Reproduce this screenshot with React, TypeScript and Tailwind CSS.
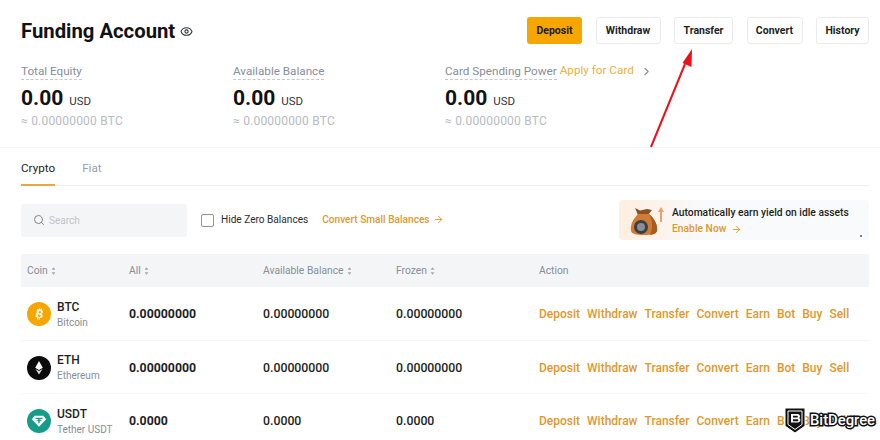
import React from "react";
import { Eye, Search, ArrowRight, ChevronRight } from "lucide-react";

const font = "font-['Roboto','Noto_Sans',sans-serif]";

const buttons = [
  { label: "Withdraw", w: "w-[65px]" },
  { label: "Transfer", w: "w-[59px]" },
  { label: "Convert", w: "w-[56px]" },
  { label: "History", w: "w-[53px]" },
];

const actions = ["Deposit", "Withdraw", "Transfer", "Convert", "Earn", "Bot", "Buy", "Sell"];

const rows = [
  { sym: "BTC", name: "Bitcoin", bal: "0.00000000", icon: "btc" },
  { sym: "ETH", name: "Ethereum", bal: "0.00000000", icon: "eth" },
  { sym: "USDT", name: "Tether USDT", bal: "0.0000", icon: "usdt" },
];

const CoinIcon: React.FC<{ kind: string }> = ({ kind }) => {
  if (kind === "btc") {
    return (
      <svg viewBox="0 0 24 24" className="w-6 h-6 shrink-0">
        <circle cx="12" cy="12" r="12" fill="#f7a600" />
        <g transform="rotate(12 12 12)">
          <path d="M9.2 7.5h3.9c1.5 0 2.4.8 2.4 2 0 .9-.5 1.5-1.2 1.8 1 .2 1.7 1 1.7 2.1 0 1.4-1 2.3-2.7 2.3H9.2zm2.2 1.6v2h1.3c.7 0 1-.4 1-1s-.3-1-1-1zm0 3.5v2.2h1.6c.7 0 1.1-.4 1.1-1.1s-.4-1.1-1.1-1.1zM11 6h1.1v1.5H11zm1.8 0h1.1v1.5h-1.1zM11 15.9h1.1v1.7H11zm1.8 0h1.1v1.7h-1.1z" fill="#fff" opacity="0.9" />
        </g>
      </svg>
    );
  }
  if (kind === "eth") {
    return (
      <svg viewBox="0 0 24 24" className="w-6 h-6 shrink-0">
        <circle cx="12" cy="12" r="12" fill="#0b0b0b" />
        <path d="M12 5l-3.800 6.800L12 14l3.800-2.200z" fill="#fff" />
        <path d="M8.400 13L12 18.600l3.600-5.600L12 15.100z" fill="#d8d8d8" />
      </svg>
    );
  }
  return (
    <svg viewBox="0 0 24 24" className="w-6 h-6 shrink-0">
      <circle cx="12" cy="12" r="12" fill="#179c8c" />
      <path d="M7.600 6.800h8.800l2.800 3.400L12 17.800 4.800 10.200z" fill="#fff" />
      <path d="M8.600 8.800h6.800V10h-2.700v.7c1.200.1 2 .3 2 .6s-.8.5-2 .6v2.400h-1.400v-2.400c-1.200-.1-2-.3-2-.6s.8-.5 2-.6V10H8.600z" fill="#179c8c" />
    </svg>
  );
};

const Stat: React.FC<{ label: string; extra?: boolean }> = ({ label, extra }) => (
  <div className="w-[212px] shrink-0">
    <div className="flex items-center h-[18px] text-[11.7px] whitespace-nowrap">
      <span className="text-[#868e9a] border-b border-dashed border-[#c4c8ce] leading-[16px]">{label}</span>
      {extra && (
        <>
          <span className="ml-[3px] text-[#eeb042]">Apply for Card</span>
          <ChevronRight className="ml-[6px] w-[13px] h-[13px] text-[#868e9a]" />
        </>
      )}
    </div>
    <div className="flex items-baseline mt-[4px] h-[28px]">
      <span className="text-[21px] font-bold leading-[28px] text-[#121214]">0.00</span>
      <span className="ml-[6px] text-[11.5px] text-[#32363c]">USD</span>
    </div>
    <div className="text-[12px] leading-[18px] text-[#b7bbc2] tracking-[0.2px]">≈ 0.00000000 BTC</div>
  </div>
);

const SortHead: React.FC<{ label: string; className: string }> = ({ label, className }) => (
  <div className={`flex items-center text-[10.3px] text-[#868e9a] ${className}`}>
    {label}
    <svg viewBox="0 0 6 9" className="ml-[3px] w-[5px] h-[8px]">
      <path d="M3 0l2.400 3H.6zM3 9L.6 6h4.800z" fill="#a4a9b1" />
    </svg>
  </div>
);

export default function App() {
  return (
    <div className={`relative w-[880px] h-[440px] overflow-hidden bg-white ${font}`}>
      {/* Header */}
      <div className="flex justify-between items-start pl-[21px] pr-[11px] pt-[17px]">
        <div className="flex items-center h-[27px] pt-[1px]">
          <h1 className="text-[20.3px] font-bold text-[#121214] leading-none">Funding Account</h1>
          <Eye className="ml-[5px] w-[13px] h-[13px] text-[#32363c]" />
        </div>
        <div className="flex gap-[13.5px]">
          <button className="w-[55px] h-[27px] pt-[1px] rounded-[3px] bg-[#f7a600] text-[10.5px] font-bold text-[#1d1a10]">Deposit</button>
          {buttons.map((b) => (
            <button key={b.label} className={`${b.w} h-[27px] pt-[1px] rounded-[3px] border border-[#e9ebee] text-[10.5px] font-bold text-[#1d1f23]`}>
              {b.label}
            </button>
          ))}
        </div>
      </div>

      {/* Balances */}
      <div className="flex pl-[21px] pt-[18px] pb-[17px] border-b border-[#f6f6f7]">
        <Stat label="Total Equity" />
        <Stat label="Available Balance" />
        <Stat label="Card Spending Power" extra />
      </div>

      {/* Tabs */}
      <div className="ml-[21px] mr-[11px] flex gap-[27px] h-[38px] border-b border-[#eff0f2] text-[11.7px]">
        <div className="pt-[12px] h-[38px] border-b-2 border-[#e9a93a] text-[#1d1f23]">Crypto</div>
        <div className="pt-[12px] text-[#9aa0a9]">Fiat</div>
      </div>

      {/* Filters */}
      <div className="ml-[21px] mr-[11px] flex items-center h-[40px] mt-[14px]">
        <div className="flex items-center w-[166px] h-[33px] rounded-[3px] bg-[#f4f5f7] pl-[12px]">
          <Search className="w-[12px] h-[12px] text-[#7d848f]" />
          <span className="ml-[4px] text-[10px] text-[#c0c4ca]">Search</span>
        </div>
        <div className="ml-[14px] w-[13px] h-[13px] rounded-[2px] border border-[#8f949c]" />
        <span className="ml-[7px] text-[10.1px] text-[#2a2d32] whitespace-nowrap">Hide Zero Balances</span>
        <span className="ml-[14px] flex items-center text-[10.1px] font-medium text-[#e0982e] whitespace-nowrap">
          Convert Small Balances
          <ArrowRight className="ml-[3px] w-[11px] h-[11px]" />
        </span>
        <div className="ml-auto flex items-center w-[250px] h-[40px] rounded-[4px] bg-gradient-to-r from-[#fdeee0] from-0% via-[#f9fafb] via-35% to-[#f9fafb]">
          <svg viewBox="0 0 44 34" className="ml-[8px] w-[44px] h-[34px] shrink-0">
            <path d="M35 19h-2V9h-2l3-5 3 5h-2z" fill="#f0a060" />
            <path d="M8 5l5 2.500L20 6l5 1-4 5H11z" fill="#8a5220" />
            <path d="M11 11h11c6 5 9 12 8 17-1 3-5 4-13 4S5 31 4 28c-1-6 2-12 7-17z" fill="#cf7c34" />
            <path d="M22 11c6 5 9 12 8 17-1 3-4 3.500-7 4 3-6 3-15-1-21z" fill="#a85c20" />
            <circle cx="14" cy="24" r="7" fill="#3c3f46" />
            <circle cx="14" cy="24" r="4" fill="#8a8e96" />
          </svg>
          <div className="ml-[1px] mt-[2px]">
            <div className="text-[10.3px] font-medium leading-[16px] text-[#1d1f23] whitespace-nowrap">Automatically earn yield on idle assets</div>
            <div className="flex items-center text-[10.3px] leading-[16px] font-medium text-[#e0982e]">
              Enable Now
              <ArrowRight className="ml-[5px] w-[11px] h-[11px]" />
            </div>
          </div>
          <div className="ml-auto self-end mb-[3px] mr-[7px] w-[2px] h-[2px] rounded-full bg-[#555]" />
        </div>
      </div>

      {/* Table */}
      <div className="ml-[21px] mr-[11px] mt-[14px]">
        <div className="flex items-center h-[33px] bg-[#f4f5f7] pl-[6px]">
          <SortHead label="Coin" className="w-[102px]" />
          <SortHead label="All" className="w-[134px]" />
          <SortHead label="Available Balance" className="w-[133px]" />
          <SortHead label="Frozen" className="w-[143px]" />
          <div className="text-[10.3px] text-[#868e9a]">Action</div>
        </div>
        {rows.map((r) => (
          <div key={r.sym} className="flex items-center h-[53.5px] pt-[2px] pl-[6px] border-b border-[#f7f7f8]">
            <div className="w-[102px] flex items-center">
              <CoinIcon kind={r.icon} />
              <div className="ml-[6px]">
                <div className="text-[12px] font-medium leading-[16px] text-[#1d1f23]">{r.sym}</div>
                <div className="text-[10px] leading-[15px] text-[#868e9a] whitespace-nowrap">{r.name}</div>
              </div>
            </div>
            <div className="w-[134px] text-[12.3px] font-bold text-[#1d1f23]">{r.bal}</div>
            <div className="w-[133px] text-[12.3px] font-medium text-[#1d1f23]">{r.bal}</div>
            <div className="w-[143px] text-[12.3px] font-medium text-[#1d1f23]">{r.bal}</div>
            <div className="flex gap-[7px] text-[12px] font-medium text-[#e0982e] whitespace-nowrap">
              {actions.map((a) => (
                <span key={a}>{a}</span>
              ))}
            </div>
          </div>
        ))}
      </div>

      {/* Annotation arrow */}
      <svg viewBox="0 0 880 440" className="absolute inset-0 w-[880px] h-[440px] pointer-events-none">
        <path d="M651 147L685 64" stroke="#ee1018" strokeWidth="2" fill="none" />
        <path d="M692 49l-.5 18-9-4z" fill="#ee1018" />
      </svg>

      {/* Watermark */}
      <div className="absolute right-[5px] bottom-[6px] flex items-center">
        <svg viewBox="0 0 22 27" className="w-[22px] h-[27px]">
          <path d="M1 1h20v18l-10 7-10-7z" fill="#111" stroke="#fff" strokeWidth="1" />
          <path d="M4 4h14v13.500l-7 5-7-5z" fill="none" stroke="#fff" strokeWidth="1" />
          <path d="M7 7h6.500c1.500 0 2.500 1 2.500 2.300 0 .9-.4 1.500-1 1.800.8.3 1.300 1 1.300 2 0 1.400-1 2.400-2.600 2.400H7zm2 1.800v1.800h4c.5 0 .9-.4.9-.9s-.4-.9-.9-.9zm0 3.500v1.900h4.400c.6 0 1-.4 1-1s-.4-.9-1-.9z" fill="#fff" />
        </svg>
        <span className="ml-[4px] text-white text-[14.8px] leading-[17px] font-medium [-webkit-text-stroke:3px_#111] [paint-order:stroke_fill]">BitDegree</span>
      </div>
    </div>
  );
}
